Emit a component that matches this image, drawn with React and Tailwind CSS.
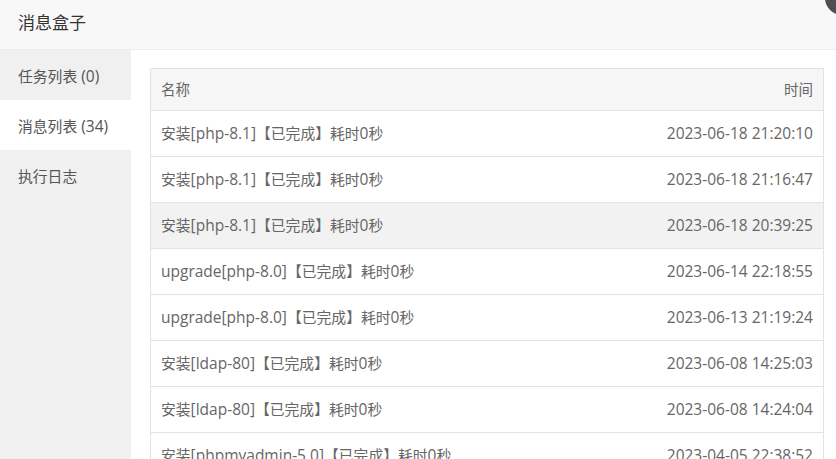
import React from 'react';

const tabs = [
  { label: '任务列表 (0)', active: false },
  { label: '消息列表 (34)', active: true },
  { label: '执行日志', active: false },
];

const messages = [
  { name: '安装[php-8.1]【已完成】耗时0秒', time: '2023-06-18 21:20:10' },
  { name: '安装[php-8.1]【已完成】耗时0秒', time: '2023-06-18 21:16:47' },
  { name: '安装[php-8.1]【已完成】耗时0秒', time: '2023-06-18 20:39:25', hover: true },
  { name: 'upgrade[php-8.0]【已完成】耗时0秒', time: '2023-06-14 22:18:55' },
  { name: 'upgrade[php-8.0]【已完成】耗时0秒', time: '2023-06-13 21:19:24' },
  { name: '安装[ldap-80]【已完成】耗时0秒', time: '2023-06-08 14:25:03' },
  { name: '安装[ldap-80]【已完成】耗时0秒', time: '2023-06-08 14:24:04' },
  { name: '安装[phpmyadmin-5.0]【已完成】耗时0秒', time: '2023-04-05 22:38:52' },
];

// CJK runs and latin runs get slightly different sizes (like YaHei's built-in latin)
const Mixed = ({ text }) => {
  const parts = text.split(/([\u3000-\u303f\u4e00-\u9fff\uff00-\uffef]+)/).filter(Boolean);
  return (
    <span className="whitespace-pre">
      {parts.map((p, i) =>
        /[\u3000-\u303f\u4e00-\u9fff\uff00-\uffef]/.test(p) ? (
          <span key={i} className="text-[14.8px]">{p}</span>
        ) : (
          <span key={i} className="text-[15.5px]">{p}</span>
        )
      )}
    </span>
  );
};

export default function App() {
  return (
    <div
      className="relative w-[836px] h-[459px] overflow-hidden bg-white flex flex-col"
      style={{ fontFamily: '"Open Sans", "Noto Sans CJK SC", sans-serif' }}
    >
      {/* Title bar */}
      <div className="h-[50px] shrink-0 bg-[#f8f8f8] border-b border-[#eeeeee] pl-[18px] text-[17px] leading-[45px] text-[#333]">
        消息盒子
      </div>

      {/* Close button, mostly off-screen */}
      <div className="absolute left-[825px] top-[-19px] w-[34px] h-[34px] rounded-full bg-[#4f4f4f]" />

      <div className="flex flex-1 min-h-0">
        {/* Tabs */}
        <div className="w-[131px] shrink-0 bg-[#f0f0f0]">
          {tabs.map((tab) => (
            <div
              key={tab.label}
              className={`h-[50px] pl-[18px] pt-[2px] flex items-center text-[#555] ${
                tab.active ? 'bg-white' : ''
              }`}
            >
              <Mixed text={tab.label} />
            </div>
          ))}
        </div>

        {/* Message table */}
        <div className="flex-1 pl-[19px] pr-[12px] pt-[18px]">
          <div className="border border-[#e2e2e2] text-[#666]">
            <div className="h-[42px] flex items-center justify-between px-[10px] bg-[#f6f6f6] border-b border-[#e2e2e2] text-[14.5px]">
              <span>名称</span>
              <span>时间</span>
            </div>
            {messages.map((m, i) => (
              <div
                key={i}
                className={`h-[46px] flex items-center justify-between px-[10px] border-b border-[#e2e2e2] ${
                  m.hover ? 'bg-[#f2f2f2]' : ''
                }`}
              >
                <Mixed text={m.name} />
                <Mixed text={m.time} />
              </div>
            ))}
          </div>
        </div>
      </div>
    </div>
  );
}
